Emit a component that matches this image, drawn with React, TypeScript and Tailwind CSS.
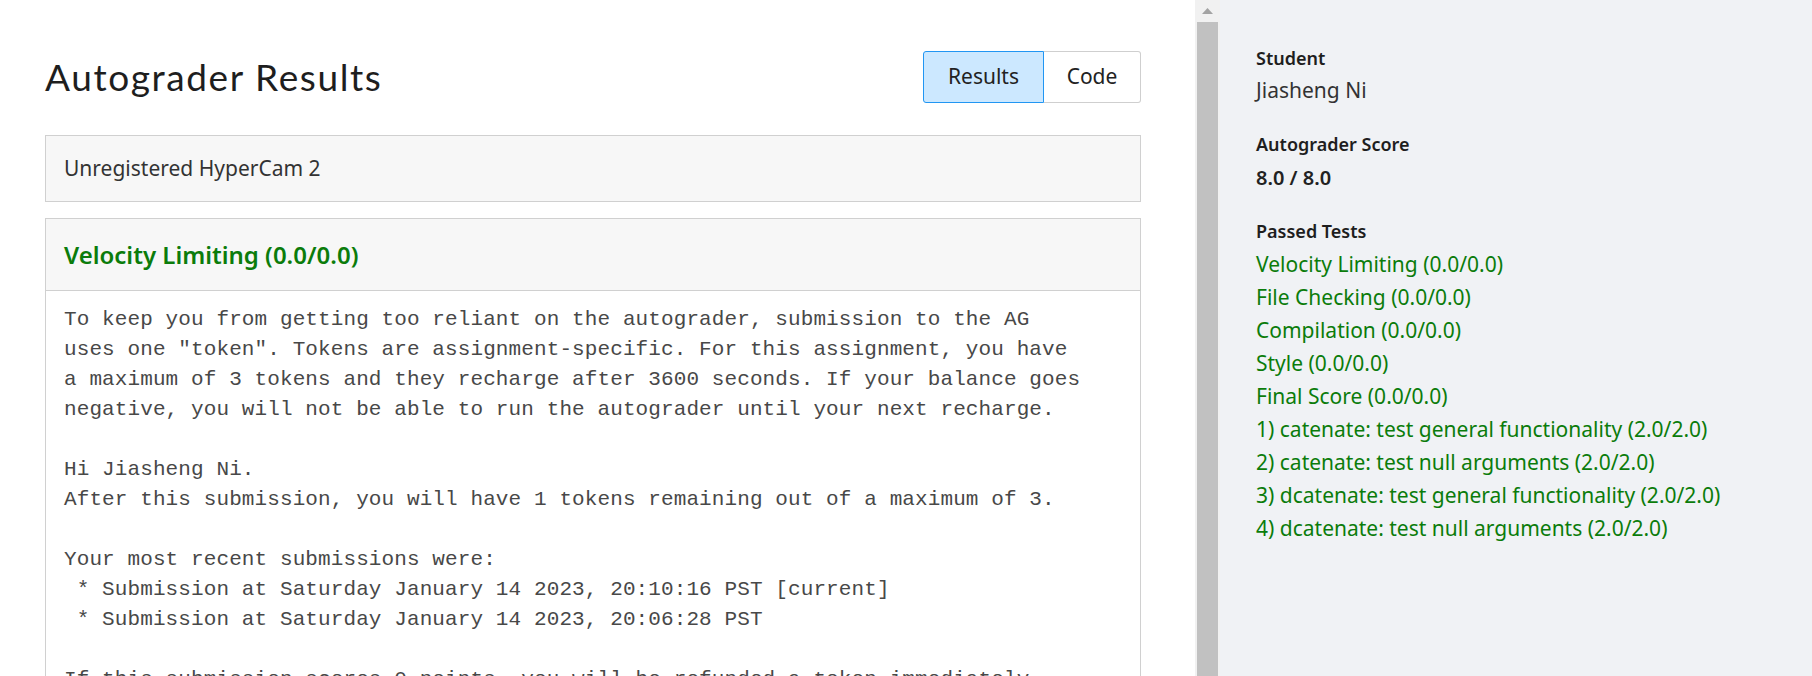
const PRE_TEXT = `To keep you from getting too reliant on the autograder, submission to the AG
uses one "token". Tokens are assignment-specific. For this assignment, you have
a maximum of 3 tokens and they recharge after 3600 seconds. If your balance goes
negative, you will not be able to run the autograder until your next recharge.

Hi Jiasheng Ni.
After this submission, you will have 1 tokens remaining out of a maximum of 3.

Your most recent submissions were:
 * Submission at Saturday January 14 2023, 20:10:16 PST [current]
 * Submission at Saturday January 14 2023, 20:06:28 PST

If this submission scores 0 points, you will be refunded a token immediately.`;

const PASSED = [
  "Velocity Limiting (0.0/0.0)",
  "File Checking (0.0/0.0)",
  "Compilation (0.0/0.0)",
  "Style (0.0/0.0)",
  "Final Score (0.0/0.0)",
  "1) catenate: test general functionality (2.0/2.0)",
  "2) catenate: test null arguments (2.0/2.0)",
  "3) dcatenate: test general functionality (2.0/2.0)",
  "4) dcatenate: test null arguments (2.0/2.0)",
];

export default function App() {
  return (
    <div className="flex h-[676px] w-[1812px] overflow-hidden bg-white font-['Noto_Sans',sans-serif] text-[#222]">
      {/* ── Panel principal ─────────────────────────────────────────── */}
      <main className="flex w-[1220px] shrink-0">
        <div className="w-[1195px] shrink-0 pl-[45px]">
          <div className="w-[1096px]">
            <header className="flex items-center justify-between pt-[51px]">
              <h1 className="font-['Lato',sans-serif] text-[37px] leading-[52px] font-normal tracking-[1.6px] text-[#1e1e1e]">
                Autograder Results
              </h1>
              <div className="flex h-[52px] text-[21px]">
                <button className="w-[121px] rounded-l-[3px] border border-[#2196f3] bg-[#cce8ff] text-[#222]">
                  Results
                </button>
                <button className="w-[97px] rounded-r-[3px] border border-l-0 border-[#cfcfcf] bg-white text-[#222]">
                  Code
                </button>
              </div>
            </header>

            <div className="mt-[32px] flex h-[67px] items-center border border-[#d0d0d0] bg-[#f7f7f7] pl-[18px] text-[21px] text-[#333]">
              Unregistered HyperCam 2
            </div>

            <section className="mt-[16px] border border-[#d0d0d0]">
              <div className="flex h-[72px] items-center border-b border-[#d0d0d0] bg-[#f7f7f7] pl-[18px]">
                <h2 className="text-[24px] font-semibold text-[#0b7c0b]">Velocity Limiting (0.0/0.0)</h2>
              </div>
              <pre className="px-[18px] pt-[14px] pb-6 font-['Liberation_Mono',monospace] text-[21px] leading-[30px] tracking-[0.1px] text-[#484848]">
                {PRE_TEXT}
              </pre>
            </section>
          </div>
        </div>

        {/* barra de desplazamiento */}
        <div className="flex w-[25px] shrink-0 flex-col bg-[#f1f1f1]">
          <div className="flex h-[22px] items-center justify-center">
            <svg width="11" height="6" viewBox="0 0 11 6">
              <path d="M5.5 0L11 6H0z" fill="#a3a3a3" />
            </svg>
          </div>
          <div className="ml-[2px] w-[21px] flex-1 bg-[#c1c1c1]" />
        </div>
      </main>

      {/* ── Panel lateral ───────────────────────────────────────────── */}
      <aside className="flex-1 bg-[#f0f2f5] pt-[46px] pl-[36px]">
        <h3 className="text-[18px] leading-[24px] font-semibold text-[#1e1e1e]">Student</h3>
        <p className="mt-[5px] text-[21px] leading-[30px] text-[#333]">Jiasheng Ni</p>

        <h3 className="mt-[27px] text-[18px] leading-[24px] font-semibold text-[#1e1e1e]">Autograder Score</h3>
        <p className="mt-[7px] text-[20px] leading-[30px] font-semibold text-[#222]">8.0 / 8.0</p>

        <h3 className="mt-[26px] text-[18px] leading-[24px] font-semibold text-[#1e1e1e]">Passed Tests</h3>
        <ul className="mt-[5px]">
          {PASSED.map((t) => (
            <li key={t} className="text-[21px] leading-[33px] text-[#0b7c0b]">
              {t}
            </li>
          ))}
        </ul>
      </aside>
    </div>
  );
}
